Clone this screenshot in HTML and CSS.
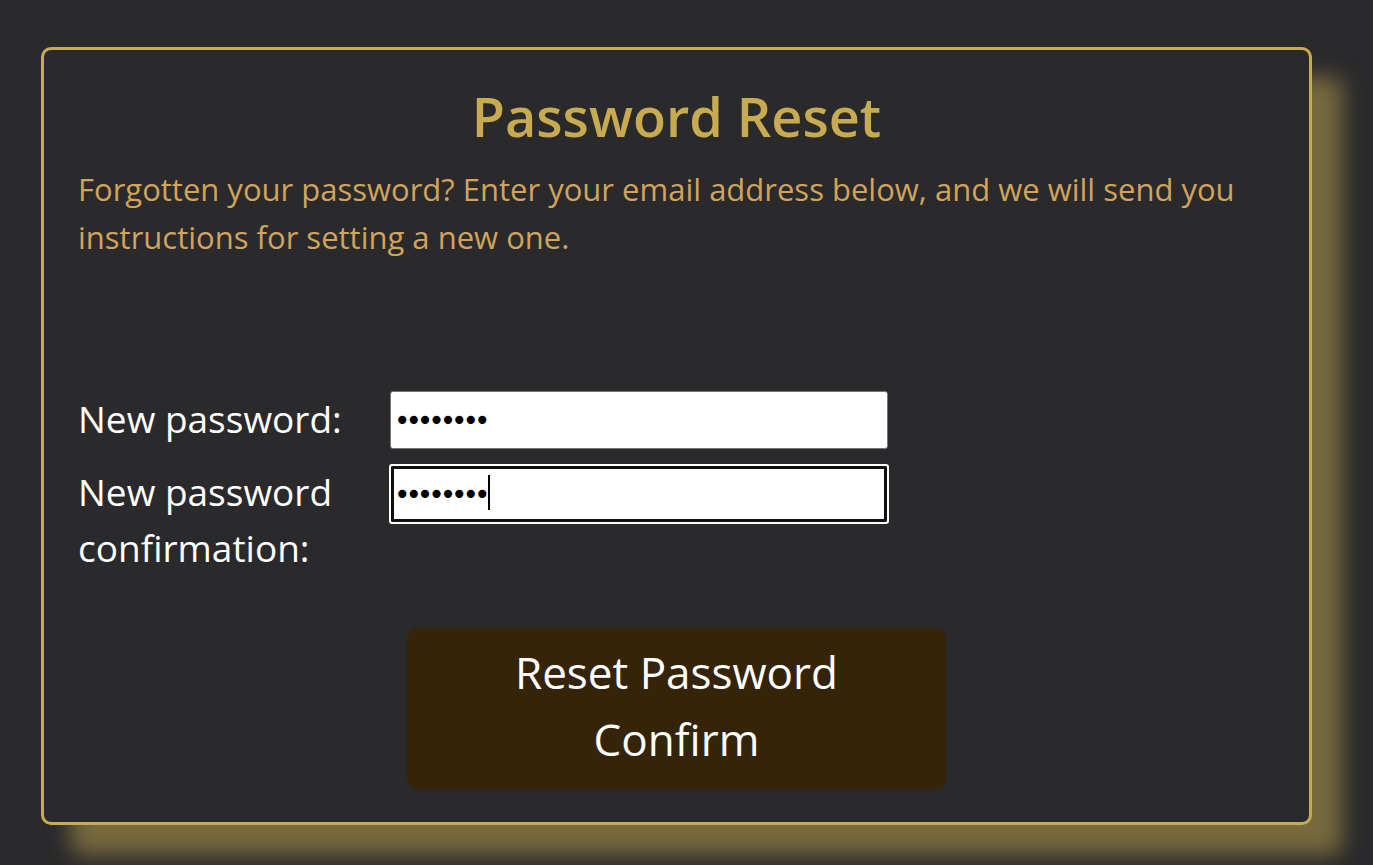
FILE: index.html
```html
<!DOCTYPE html>
<html lang="en">
<head>
<meta charset="utf-8">
<title>Password Reset</title>
<link rel="stylesheet" href="styles.css">
</head>
<body>
<main class="card">
  <h1 class="title">Password Reset</h1>
  <p class="intro">Forgotten your password? Enter your email address below, and we will send you instructions for setting a new one.</p>
  <form class="form">
    <div class="fields">
      <label class="label" for="p1">New password:</label>
      <div class="field"><input class="input" id="p1" type="password" value="abcdefgh"></div>
      <label class="label" for="p2">New password confirmation:</label>
      <div class="field"><input class="input focused" id="p2" type="password" value="abcdefgh"><span class="caret"></span></div>
    </div>
    <div class="actions">
      <button class="btn" type="button">Reset Password<br>Confirm</button>
    </div>
  </form>
</main>
</body>
</html>
```
FILE: styles.css
```css
html, body {
  margin: 0;
  padding: 0;
  background: #2a2a2c;
}
body {
  padding: 47px 61px 40px 41px;
  font-family: "Open Sans", "Noto Sans", sans-serif;
}
.card {
  box-sizing: border-box;
  height: 778px;
  border: 3px solid #c8aa50;
  border-radius: 10px;
  box-shadow: 30px 30px 22px rgba(200, 170, 80, 0.5);
  padding: 26px 34px 0 34px;
  background: #2a2a2c;
}
.title {
  margin: 0;
  text-align: center;
  color: #c8aa50;
  font-size: 54px;
  font-weight: 600;
  line-height: 80px;
}
.intro {
  margin: 9px 0 0 0;
  color: #d1a35b;
  font-size: 31px;
  line-height: 48px;
}
.form {
  margin-top: 130px;
}
.fields {
  display: grid;
  grid-template-columns: 312px 500px;
  row-gap: 15px;
  align-items: start;
}
.label {
  color: #ffffff;
  font-size: 37px;
  line-height: 56px;
}
.field {
  position: relative;
}
.input {
  box-sizing: border-box;
  width: 498px;
  height: 58px;
  margin: 0;
  border: 1px solid #767676;
  border-radius: 3px;
  background: #fff;
  padding: 0 3px;
  font-family: "DejaVu Sans", sans-serif;
  font-size: 28px;
  letter-spacing: -5.1px;
  color: #000;
  outline: none;
}
.input.focused {
  width: 500px;
  height: 60px;
  margin-left: -1px;
  border: 2px solid #fff;
  box-shadow: inset 0 0 0 3px #101010;
  padding: 0 3px;
}
.caret {
  position: absolute;
  left: 98px;
  top: 11px;
  width: 2px;
  height: 35px;
  background: #000;
}
.actions {
  display: flex;
  justify-content: center;
  margin-top: 52px;
}
.btn {
  width: 539px;
  height: 161px;
  border: none;
  border-radius: 10px;
  background: #35240a;
  color: #fff;
  font-family: "Open Sans", "Noto Sans", sans-serif;
  font-size: 44px;
  line-height: 67px;
  padding: 0 0 6px 0;
}
```
